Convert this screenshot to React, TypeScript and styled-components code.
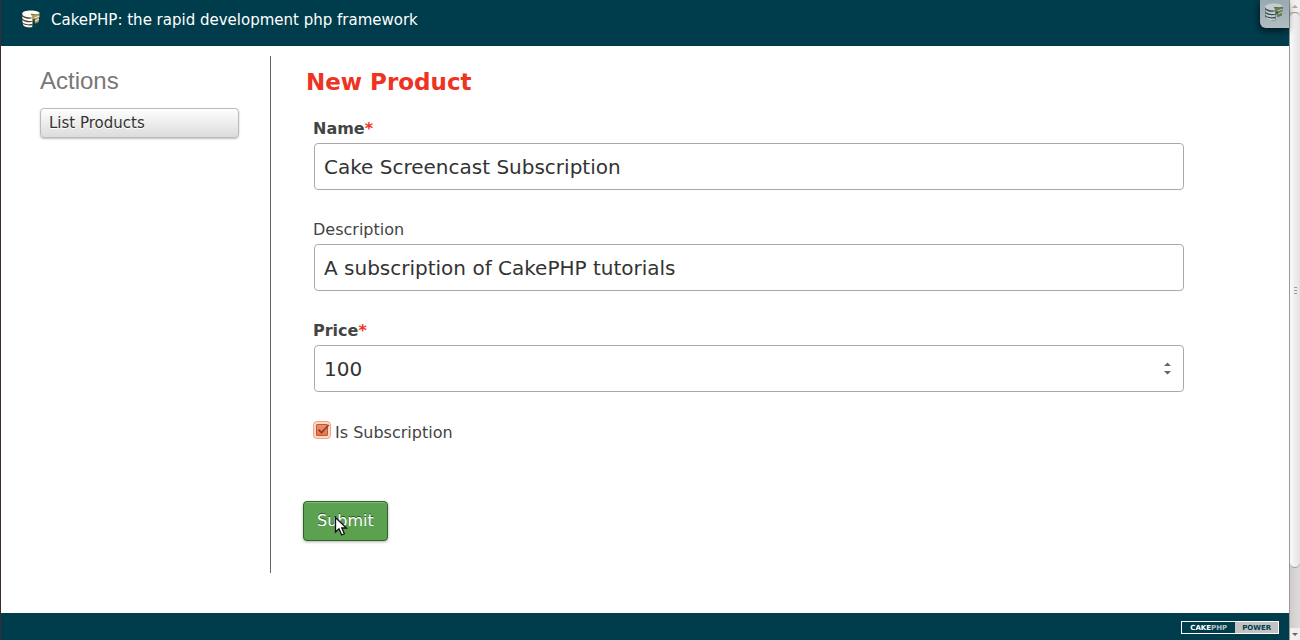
import React from 'react';
import styled, { createGlobalStyle } from 'styled-components';

const GlobalStyle = createGlobalStyle`
  *, *::before, *::after { box-sizing: border-box; }
  html, body { margin: 0; padding: 0; }
  body {
    background: #003d4c;
    color: #333;
    font-family: "DejaVu Sans", Verdana, sans-serif;
    font-size: 16px;
  }
`;

const Window = styled.div`
  display: flex;
  min-height: 100vh;
  background: #003d4c;
  border-left: 1px solid #3c2b33;
`;

const Page = styled.div`
  flex: 1;
  min-width: 0;
  display: flex;
  flex-direction: column;
`;

const Header = styled.header`
  position: relative;
  height: 46px;
  padding: 10px 20px;
`;

const SiteTitle = styled.h1`
  margin: 0;
  font-size: 15px;
  line-height: 20px;
  font-weight: normal;
`;

const SiteLink = styled.a`
  display: flex;
  align-items: center;
  gap: 10px;
  color: #fff;
  text-decoration: none;
`;

const DebugButton = styled.button`
  position: absolute;
  top: 0;
  right: 0;
  width: 29px;
  height: 28px;
  padding: 3px 0 0 4px;
  display: flex;
  align-items: flex-start;
  border: 0;
  border-radius: 0 0 0 6px;
  background: linear-gradient(#98a9b0, #b1bcc1);
  box-shadow: -1px 3px 7px rgba(0, 0, 0, 0.6);
`;

const Content = styled.main`
  flex: 1;
  display: flex;
  padding: 10px 20px 40px;
  background: #fff;
`;

const Actions = styled.nav`
  width: 249px;
  flex: none;
  padding: 11px 11px 0 19px;
`;

const ActionsTitle = styled.h3`
  margin: 0 0 13px;
  font-family: "Liberation Sans", Arial, sans-serif;
  font-size: 24px;
  line-height: 28px;
  font-weight: normal;
  color: #777;
`;

const ActionList = styled.ul`
  width: 199px;
  margin: 0;
  padding: 0;
  list-style: none;
`;

const ActionLink = styled.a`
  display: block;
  padding: 4px 8px;
  border: 1px solid #bbb;
  border-radius: 4px;
  background: linear-gradient(#fefefe, #dcdcdc);
  box-shadow: 0 1px 2px rgba(0, 0, 0, 0.25);
  color: #333;
  font-size: 15px;
  line-height: 20px;
  text-decoration: none;
  text-shadow: 0 1px 0 #fff;
`;

const FormArea = styled.section`
  flex: 1;
  min-width: 0;
  padding: 11px 85px 0 32px;
  border-left: 1px solid #666;
`;

const FormTitle = styled.h2`
  margin: 0 0 21px;
  padding-left: 3px;
  font-size: 23px;
  line-height: 30px;
  color: #ee3322;
`;

const Field = styled.div`
  display: flex;
  flex-direction: column;
  margin: 0 0 29px 10px;
`;

const Label = styled.label<{ $required?: boolean }>`
  margin-bottom: 3px;
  font-size: 16px;
  line-height: 22px;
  font-weight: ${p => (p.$required ? 'bold' : 'normal')};
  color: #444;
`;

const Star = styled.span`
  color: #ee3322;
`;

const InputFrame = styled.div`
  display: flex;
  align-items: center;
  height: 47px;
  margin-left: 1px;
  padding-right: 12px;
  border: 1px solid #aaa;
  border-radius: 4px;
  background: #fff;
`;

const TextInput = styled.input`
  flex: 1;
  min-width: 0;
  padding: 8px 9px;
  border: 0;
  outline: 0;
  background: transparent;
  color: #333;
  font-family: inherit;
  font-size: 20px;
  line-height: 24px;
  appearance: textfield;
  &::-webkit-inner-spin-button { appearance: none; margin: 0; }
`;

const CheckField = styled.div`
  display: flex;
  align-items: flex-start;
  gap: 4px;
  margin: 0 0 57px 10px;
`;

const CheckShell = styled.span`
  position: relative;
  display: flex;
  width: 18px;
  height: 18px;
`;

const CheckBox = styled.input`
  appearance: none;
  width: 18px;
  height: 18px;
  margin: 0;
  border: 1px solid #f5a184;
  border-radius: 4px;
  background: linear-gradient(#f6926c, #ef6d3f) padding-box;
  box-shadow: inset 0 0 0 2px #fcd9ca;
`;

const CheckMark = styled.svg`
  position: absolute;
  top: 0;
  left: 0;
  pointer-events: none;
`;

const CheckLabel = styled.label`
  padding-top: 1px;
  line-height: 22px;
  color: #444;
`;

const SubmitButton = styled.button`
  position: relative;
  display: block;
  padding: 8px 13px;
  border: 1px solid #2d6324;
  border-radius: 4px;
  background: #5ba150;
  box-shadow: inset 0 1px 0 #85bb7c, 0 1px 3px rgba(0, 0, 0, 0.3);
  color: #fff;
  font-family: inherit;
  font-size: 16px;
  line-height: 22px;
  text-shadow: 0 -1px 0 rgba(0, 0, 0, 0.5);
`;

const Pointer = styled.svg`
  position: absolute;
  top: 14px;
  left: 30px;
  pointer-events: none;
`;

const Footer = styled.footer`
  display: flex;
  justify-content: flex-end;
  padding: 8px 10px 6px;
`;

const PowerBadge = styled.a`
  display: flex;
  width: 98px;
  height: 13px;
  border: 1px solid #fff;
  color: #fff;
  font-size: 7px;
  line-height: 12px;
  font-weight: bold;
  text-decoration: none;
`;

const BadgeName = styled.span`
  flex: 54;
  text-align: center;
`;

const BadgeSuffix = styled.span`
  color: #b4c3c8;
`;

const BadgePower = styled.span`
  flex: 43;
  background: #c2c2c2;
  color: #003d4c;
  text-align: center;
`;

const ScrollTrack = styled.div`
  display: flex;
  flex-direction: column;
  flex: none;
  width: 11px;
  border-left: 1px solid #999;
  background: linear-gradient(90deg, #cfcccb, #dfdddc);
`;

const ScrollEnd = styled.div`
  display: flex;
  align-items: center;
  justify-content: center;
  height: 12px;
  background: #f1f0ef;
`;

const ScrollThumb = styled.div`
  flex: 1;
  display: flex;
  align-items: center;
  justify-content: center;
  margin-bottom: 60px;
  border: 1px solid #999;
  border-width: 1px 0;
  border-radius: 6px;
  background: linear-gradient(90deg, #fbfafa, #e3e1e1);
`;

const Cake = ({ line, shade, edge }: { line: string; shade: string; edge: string }) => (
  <svg width="20" height="20" viewBox="0 0 20 20" aria-hidden="true">
    <path d="M1.2 4.5V13.5C2 16.3 6 17.8 11.5 17.3V12L13.5 10.5V14L17.5 12.5L18.8 4Z" fill={edge} />
    <path d="M9.5 4.5L18.5 4.2L17.6 12L14.2 13.6V8.5L11.5 9.5V16.5Z" fill={shade} />
    <path d="M1.2 3.8C1.2 1.8 5 .6 10 .6C14.5 .6 18.6 1.8 18.8 3.6L15.8 4.2L9.7 3.8L11.3 7.3C5.5 7.8 1.2 6.3 1.2 3.8Z" fill={line} />
    <path d="M1.4 6.4C3.2 8.4 7 9.1 11.2 8.6V10.9C7 11.4 3.2 10.6 1.4 8.6ZM1.4 9.9C3.2 11.9 7 12.5 11.2 12V14.1C7 14.6 3.2 13.9 1.6 12.2ZM1.9 13.5C3.9 15.3 7.2 15.8 11.2 15.3V17.1C7.2 17.7 3.7 17 2.3 15.2Z" fill={line} />
    <path d="M13.5 7.8L18.4 6.2M13.8 11L18 9.2" stroke={line} strokeWidth=".9" />
  </svg>
);

export default function App() {
  return (
    <>
      <GlobalStyle />
      <Window>
        <Page>
          <Header>
            <SiteTitle>
              <SiteLink href="#">
                <Cake line="#fffdf6" shade="#aaa25f" edge="#4c4540" />
                CakePHP: the rapid development php framework
              </SiteLink>
            </SiteTitle>
            <DebugButton type="button" aria-label="Toggle debug toolbar">
              <Cake line="#c3cdce" shade="#6a7d49" edge="#344a50" />
            </DebugButton>
          </Header>
          <Content>
            <Actions>
              <ActionsTitle>Actions</ActionsTitle>
              <ActionList>
                <li><ActionLink href="#">List Products</ActionLink></li>
              </ActionList>
            </Actions>
            <FormArea>
              <form onSubmit={e => e.preventDefault()}>
                <FormTitle>New Product</FormTitle>
                <Field>
                  <Label htmlFor="name" $required><span>Name</span><Star>*</Star></Label>
                  <InputFrame>
                    <TextInput id="name" type="text" defaultValue="Cake Screencast Subscription" />
                  </InputFrame>
                </Field>
                <Field>
                  <Label htmlFor="description">Description</Label>
                  <InputFrame>
                    <TextInput id="description" type="text" defaultValue="A subscription of CakePHP tutorials" />
                  </InputFrame>
                </Field>
                <Field>
                  <Label htmlFor="price" $required><span>Price</span><Star>*</Star></Label>
                  <InputFrame>
                    <TextInput id="price" type="number" defaultValue="100" />
                    <svg width="7" height="13" viewBox="0 0 7 13" aria-hidden="true">
                      <path d="M0 4L3.5 .5L7 4ZM0 9L3.5 12.5L7 9Z" fill="#666" />
                    </svg>
                  </InputFrame>
                </Field>
                <CheckField>
                  <CheckShell>
                    <CheckBox id="subscription" type="checkbox" defaultChecked />
                    <CheckMark width="18" height="18" viewBox="0 0 18 18" aria-hidden="true">
                      <rect x="3.5" y="3.5" width="11" height="11" rx="1.5" fill="none" stroke="#b75a35" />
                      <path d="M5.5 8.7L8.5 11.7L15.7 4" fill="none" stroke="#7b4632" strokeWidth="1.7" />
                    </CheckMark>
                  </CheckShell>
                  <CheckLabel htmlFor="subscription">Is Subscription</CheckLabel>
                </CheckField>
                <SubmitButton type="submit">
                  Submit
                  <Pointer width="14" height="21" viewBox="0 0 14 21" aria-hidden="true">
                    <path d="M1.5 1.5V16L5 12.8L7.7 19L10.3 17.8L7.8 12H12.4Z" fill="#fff" stroke="#111" strokeWidth="1.3" />
                  </Pointer>
                </SubmitButton>
              </form>
            </FormArea>
          </Content>
          <Footer>
            <PowerBadge href="#">
              <BadgeName>CAKE<BadgeSuffix>PHP</BadgeSuffix></BadgeName>
              <BadgePower>POWER</BadgePower>
            </PowerBadge>
          </Footer>
        </Page>
        <ScrollTrack aria-hidden="true">
          <ScrollEnd>
            <svg width="6" height="3" viewBox="0 0 6 3"><path d="M0 3L3 0L6 3Z" fill="#aaa" /></svg>
          </ScrollEnd>
          <ScrollThumb>
            <svg width="3" height="7" viewBox="0 0 3 7"><path d="M0 .5H3M0 3.5H3M0 6.5H3" stroke="#999" /></svg>
          </ScrollThumb>
          <ScrollEnd>
            <svg width="6" height="3" viewBox="0 0 6 3"><path d="M0 0L3 3L6 0Z" fill="#666" /></svg>
          </ScrollEnd>
        </ScrollTrack>
      </Window>
    </>
  );
}
